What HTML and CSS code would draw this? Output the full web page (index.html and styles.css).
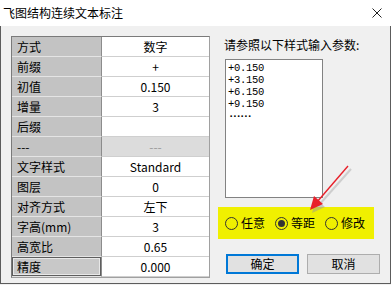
FILE: index.html
```html
<!DOCTYPE html>
<html lang="zh-CN">
<head>
  <meta charset="UTF-8">
  <title>飞图结构连续文本标注</title>
  <link rel="stylesheet" href="styles.css">
</head>
<body>

<div class="dialog">
  <div class="titlebar">
    <span class="title">飞图结构连续文本标注</span>
    <svg class="close" width="10" height="10" viewBox="0 0 10 10">
      <path d="M0.5 0.5 L9.5 9.5 M9.5 0.5 L0.5 9.5" stroke="#222" stroke-width="1"/>
    </svg>
  </div>

  <div class="content">
    <div class="grid">
      <div class="lbl">方式</div><div class="val">数字</div>
      <div class="lbl">前缀</div><div class="val">+</div>
      <div class="lbl">初值</div><div class="val">0.150</div>
      <div class="lbl">增量</div><div class="val">3</div>
      <div class="lbl">后缀</div><div class="val"></div>
      <div class="lbl">---</div><div class="val off">---</div>
      <div class="lbl">文字样式</div><div class="val">Standard</div>
      <div class="lbl">图层</div><div class="val">0</div>
      <div class="lbl">对齐方式</div><div class="val">左下</div>
      <div class="lbl">字高(mm)</div><div class="val">3</div>
      <div class="lbl">高宽比</div><div class="val">0.65</div>
      <div class="lbl cur">精度</div><div class="val">0.000</div>
    </div>

    <div class="side">
      <div class="hint">请参照以下样式输入参数:</div>
      <div class="sample">
        <div>+0.150</div>
        <div>+3.150</div>
        <div>+6.150</div>
        <div>+9.150</div>
        <div class="dots">······</div>
      </div>

      <div class="modes">
        <label class="radio"><span class="dot"></span>任意</label>
        <label class="radio on"><span class="dot"></span>等距</label>
        <label class="radio"><span class="dot"></span>修改</label>
      </div>

      <div class="btns">
        <button class="btn primary">确定</button>
        <button class="btn">取消</button>
      </div>
    </div>
  </div>

  <!-- annotation arrow -->
  <svg class="arrow" width="391" height="285" viewBox="0 0 391 285">
    <line x1="348" y1="167" x2="316" y2="203" stroke="#b8b8b8" stroke-width="2" opacity="0.6" transform="translate(2,2)"/>
    <polygon points="309,211 313,197 322,205" fill="#9a9a9a" opacity="0.5" transform="translate(2,2)"/>
    <line x1="347" y1="166" x2="316" y2="202" stroke="#e8202a" stroke-width="1.4"/>
    <polygon points="309,210 313,196 322,204" fill="#e8202a"/>
  </svg>
</div>

</body>
</html>
```

FILE: styles.css
```css
body {
  margin: 0;
  font-family: "Noto Sans CJK SC", "Noto Sans", sans-serif;
  font-size: 12px;
  color: #000;
  background: #f0f0f0;
}

.dialog {
  position: relative;
  width: 389px;
  height: 283px;
  background: #f0f0f0;
  border: 1px solid #5c5c5c;
  border-top: none;
}

.titlebar {
  height: 26px;
  background: #fff;
  display: flex;
  align-items: center;
  justify-content: space-between;
  padding: 0 9px 0 3px;
  margin: 0 -1px;
}
.title { font-size: 12px; line-height: 16px; }
.close { display: block; margin-top: -1px; }

.content {
  display: flex;
  padding: 10px 0 0 10px;
}

/* property grid */
.grid {
  display: grid;
  grid-template-columns: 90px 107px;
  grid-auto-rows: 20px;
  border: 1px solid #7a7a7a;
  border-right-color: #a0a0a0;
  border-bottom-color: #a0a0a0;
  background: #fff;
}
.lbl {
  background: #c3c3c3;
  border-bottom: 1px solid #e4e4e4;
  border-right: 1px solid #8c8c8c;
  padding-left: 5px;
  line-height: 19px;
}
.lbl.cur {
  box-shadow: inset 0 0 0 1px #5e5e5e, inset 0 0 0 2px #e8e8e8;
  background: #c8c8c8;
}
.val {
  background: #fff;
  border-bottom: 1px solid #cfcfcf;
  text-align: center;
  line-height: 19px;
}
.val.off { background: #dcdcdc; color: #9a9a9a; }

/* right side */
.side {
  width: 162px;
  margin-left: 8px;
}
.hint {
  padding-left: 6px;
  margin-top: 1px;
  line-height: 16px;
}
.sample {
  width: 94px;
  height: 135px;
  margin: 6px 0 0 7px;
  background: #fff;
  border: 1px solid #828282;
  padding: 2px 0 0 2px;
  font-family: "Liberation Mono", monospace;
  font-size: 10.5px;
  letter-spacing: -0.3px;
  line-height: 12px;
}
.sample .dots {
  font-weight: bold;
  letter-spacing: -2.6px;
}

.modes {
  display: flex;
  gap: 10px;
  align-items: center;
  width: 149px;
  height: 32px;
  margin-top: 9px;
  padding-left: 7px;
  background: #f0f000;
}
.radio {
  display: flex;
  align-items: center;
  gap: 3px;
  line-height: 16px;
}
.dot {
  width: 11px;
  height: 11px;
  border: 1px solid #333;
  border-radius: 50%;
  position: relative;
}
.radio.on .dot::after {
  content: "";
  position: absolute;
  left: 2px; top: 2px;
  width: 7px; height: 7px;
  border-radius: 50%;
  background: #333;
}

.btns {
  display: flex;
  gap: 8px;
  margin: 15px 0 0 8px;
}
.btn {
  width: 74px;
  height: 20px;
  padding: 0;
  background: #e1e1e1;
  border: 1px solid #adadad;
  font-family: "Noto Sans CJK SC", sans-serif;
  font-size: 12px;
  line-height: 16px;
  color: #000;
}
.btn.primary { border: 2px solid #0078d7; }

.arrow {
  position: absolute;
  left: 0; top: 0;
  pointer-events: none;
}
```
